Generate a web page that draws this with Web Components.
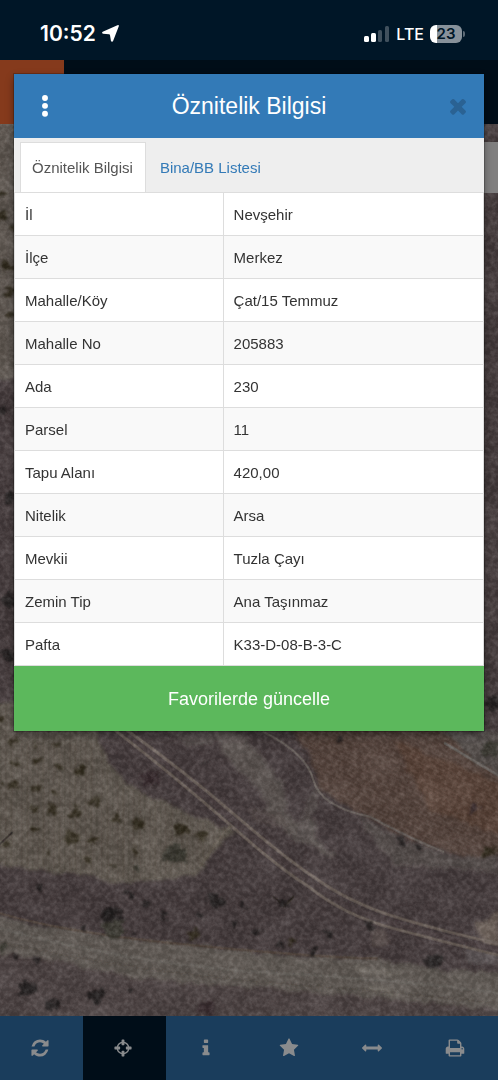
<!DOCTYPE html>
<html lang="tr">
<head>
<meta charset="utf-8">
<meta name="viewport" content="width=device-width, initial-scale=1">
<title>Öznitelik Bilgisi</title>
<style>
  html, body {
    margin: 0;
    min-height: 100%;
    background: #001627;
    font-family: "Liberation Sans", Arial, sans-serif;
  }
</style>
</head>
<body>
<parcel-app></parcel-app>

<script>
// 1792 x 1792 icon glyphs
const ICONS = {
  refresh: 'M1639 1056q0 5-1 7-64 268-268 434.500t-478 166.500q-146 0-282.500-55t-243.500-157l-129 129q-19 19-45 19t-45-19-19-45v-448q0-26 19-45t45-19h448q26 0 45 19t19 45-19 45l-137 137q71 66 161 102t187 36q134 0 250-65t186-179q11-17 53-117 8-23 30-23h192q13 0 22.500 9.500t9.500 22.500zm25-800v448q0 26-19 45t-45 19h-448q-26 0-45-19t-19-45 19-45l138-138q-148-137-349-137-134 0-250 65t-186 179q-11 17-53 117-8 23-30 23h-199q-13 0-22.500-9.500t-9.500-22.500v-7q65-268 270-434.500t480-166.500q146 0 284 55.500t245 156.500l130-129q19-19 45-19t45 19 19 45z',
  crosshairs: 'M1325 1024h-109q-26 0-45-19t-19-45v-128q0-26 19-45t45-19h109q-32-108-112.500-188.500t-188.500-112.500v109q0 26-19 45t-45 19h-128q-26 0-45-19t-19-45v-109q-108 32-188.500 112.500t-112.500 188.500h109q26 0 45 19t19 45v128q0 26-19 45t-45 19h-109q32 108 112.500 188.500t188.500 112.500v-109q0-26 19-45t45-19h128q26 0 45 19t19 45v109q108-32 188.500-112.500t112.500-188.500zm339-192v128q0 26-19 45t-45 19h-143q-37 161-154.500 278.500t-278.500 154.500v143q0 26-19 45t-45 19h-128q-26 0-45-19t-19-45v-143q-161-37-278.500-154.500t-154.500-278.500h-143q-26 0-45-19t-19-45v-128q0-26 19-45t45-19h143q37-161 154.500-278.500t278.500-154.500v-143q0-26 19-45t45-19h128q26 0 45 19t19 45v143q161 37 278.500 154.500t154.500 278.500h143q26 0 45 19t19 45z',
  info: 'M1216 1344v128q0 26-19 45t-45 19h-512q-26 0-45-19t-19-45v-128q0-26 19-45t45-19h64v-384h-64q-26 0-45-19t-19-45v-128q0-26 19-45t45-19h384q26 0 45 19t19 45v576h64q26 0 45 19t19 45zm-128-1152v192q0 26-19 45t-45 19h-256q-26 0-45-19t-19-45v-192q0-26 19-45t45-19h256q26 0 45 19t19 45z',
  star: 'M1728 647q0 22-26 48l-363 354 86 500q1 7 1 20 0 21-10.500 35.500t-30.500 14.500q-19 0-40-12l-449-236-449 236q-22 12-40 12-21 0-31.500-14.500t-10.500-35.500q0-6 2-20l86-500-364-354q-25-27-25-48 0-37 56-46l502-73 225-455q19-41 49-41t49 41l225 455 502 73q56 9 56 46z',
  measure: 'M1792 896q0 26-19 45l-256 256q-19 19-45 19t-45-19-19-45v-128h-1024v128q0 26-19 45t-45 19-45-19l-256-256q-19-19-19-45t19-45l256-256q19-19 45-19t45 19 19 45v128h1024v-128q0-26 19-45t45-19 45 19l256 256q19 19 19 45z',
  print: 'M448 1536h896v-256h-896v256zm0-640h896v-384h-160q-40 0-68-28t-28-68v-160h-640v640zm1152 64q0-26-19-45t-45-19-45 19-19 45 19 45 45 19 45-19 19-45zm128 0v416q0 13-9.500 22.500t-22.500 9.500h-224v160q0 40-28 68t-68 28h-960q-40 0-68-28t-28-68v-160h-224q-13 0-22.500-9.500t-9.500-22.500v-416q0-79 56.500-135.500t135.500-56.500h64v-544q0-40 28-68t68-28h672q40 0 88 20t76 48l152 152q28 28 48 76t20 88v256h64q79 0 135.500 56.500t56.500 135.500z',
  close: 'M1490 1322q0 40-28 68l-136 136q-28 28-68 28t-68-28l-294-294-294 294q-28 28-68 28t-68-28l-136-136q-28-28-28-68t28-68l294-294-294-294q-28-28-28-68t28-68l136-136q28-28 68-28t68 28l294 294 294-294q28-28 68-28t68 28l136 136q28 28 28 68t-28 68l-294 294 294 294q28 28 28 68z',
  menu: 'M896 76a220 220 0 1 1 0 440a220 220 0 1 1 0-440zM896 666a220 220 0 1 1 0 440a220 220 0 1 1 0-440zM896 1256a220 220 0 1 1 0 440a220 220 0 1 1 0-440z'
};

// Attribute rows of the selected parcel
const PARCEL = [
  ['İl', 'Nevşehir'],
  ['İlçe', 'Merkez'],
  ['Mahalle/Köy', 'Çat/15 Temmuz'],
  ['Mahalle No', '205883'],
  ['Ada', '230'],
  ['Parsel', '11'],
  ['Tapu Alanı', '420,00'],
  ['Nitelik', 'Arsa'],
  ['Mevkii', 'Tuzla Çayı'],
  ['Zemin Tip', 'Ana Taşınmaz'],
  ['Pafta', 'K33-D-08-B-3-C']
];

/**
 * Attach an open shadow root and fill it from a template
 * @param {HTMLElement} host - The element that gets the root
 * @param {string} html - Styles and markup
 */
function render(host, html) {
  const template = document.createElement('template');
  template.innerHTML = html;
  const root = host.attachShadow({ mode: 'open' });
  root.appendChild(template.content.cloneNode(true));
  return root;
}

class FaIcon extends HTMLElement {
  constructor() {
    super();
    this.root = render(this, `
      <style>
        :host { display: block; width: 20px; height: 20px; }
        svg { display: block; width: 100%; height: 100%; fill: currentColor; }
      </style>
      <svg viewBox="0 0 1792 1792" aria-hidden="true"><path/></svg>
    `);
  }
  connectedCallback() {
    this.root.querySelector('path').setAttribute('d', ICONS[this.getAttribute('name')]);
  }
}

class StatusBar extends HTMLElement {
  constructor() {
    super();
    render(this, `
      <style>
        :host {
          display: flex;
          align-items: center;
          justify-content: space-between;
          box-sizing: border-box;
          height: 60px;
          padding: 7px 33px 0 40px;
          background: #001627;
          color: #fff;
          font-family: Inter, sans-serif;
          font-weight: 600;
        }
        .side { display: flex; align-items: center; gap: 6px; }
        .time { font-size: 21px; line-height: 24px; }
        .net { font-size: 16px; line-height: 24px; font-weight: 500; }
        svg { display: block; }
        .battery { display: flex; align-items: center; gap: 1px; }
        .level {
          width: 32px;
          border-radius: 6px;
          background: linear-gradient(90deg, #fff 23%, #87919a 23%);
          color: #001627;
          font-size: 15px;
          line-height: 18px;
          text-align: center;
        }
        .cap { width: 2px; height: 6px; border-radius: 0 2px 2px 0; background: #5d6a75; }
      </style>
      <div class="side">
        <span class="time">10:52</span>
        <svg width="17" height="17" viewBox="0 0 17 17" fill="#fff" aria-hidden="true">
          <path d="M16.800 1.200 11.200 15.700Q10.400 17.400 9 16.200L8 10.200Q7.900 9.300 7 9.300L1 8.800Q-.700 8 .700 6.800L15.400.200Q17.200-.400 16.800 1.200z"/>
        </svg>
      </div>
      <div class="side">
        <svg width="26" height="16" viewBox="0 0 26 16" fill="#fff" aria-hidden="true">
          <rect x="0" y="10" width="5" height="6" rx="1.500"/>
          <rect x="7" y="7" width="5" height="9" rx="1.500"/>
          <rect x="14" y="4" width="4" height="12" rx="1.500" opacity=".25"/>
          <rect x="21" y="0" width="4" height="16" rx="1.500" opacity=".25"/>
        </svg>
        <span class="net">LTE</span>
        <div class="battery"><div class="level">23</div><div class="cap"></div></div>
      </div>
    `);
  }
}

class AppHeader extends HTMLElement {
  constructor() {
    super();
    render(this, `
      <style>
        :host { display: flex; height: 64px; background: #000d18; }
        .logo { width: 64px; background: #853a1c; }
      </style>
      <div class="logo"></div>
    `);
  }
}

// Bushes and trees: x, y, radius, tone
const BUSHES = [
  [42, 305, 14, 0], [108, 316, 8, 0], [171, 313, 9, 0], [45, 370, 11, 0], [113, 360, 14, 0],
  [175, 380, 12, 0], [238, 394, 20, 0], [42, 436, 15, 0], [108, 442, 16, 0], [165, 457, 9, 0],
  [283, 482, 18, 0], [160, 508, 19, 0], [103, 508, 12, 0], [227, 517, 17, 0], [346, 541, 15, 0],
  [412, 550, 17, 0], [545, 567, 20, 0], [606, 586, 20, 0], [105, 567, 9, 0], [213, 592, 24, 0],
  [280, 600, 14, 0], [407, 630, 11, 0], [525, 645, 34, 2], [262, 659, 10, 0], [22, 612, 12, 0],
  [333, 679, 6, 0], [407, 690, 9, 2], [146, 643, 5, 0], [3, 432, 8, 0], [4, 236, 10, 0],
  [118, 742, 13, 1], [386, 762, 11, 1], [434, 793, 13, 1], [495, 828, 14, 1], [645, 782, 26, 1],
  [334, 832, 34, 1], [340, 868, 34, 2], [400, 883, 7, 1], [580, 887, 20, 0], [253, 868, 9, 1],
  [728, 793, 9, 1], [706, 858, 8, 1], [770, 877, 11, 1], [880, 905, 10, 0], [985, 880, 12, 1],
  [600, 826, 8, 1], [850, 788, 14, 1], [840, 912, 9, 1], [945, 935, 13, 1], [1108, 857, 11, 1],
  [1300, 965, 24, 1], [1425, 505, 13, 3], [1018, 300, 8, 1], [620, 372, 8, 1], [1468, 637, 18, 0],
  [1205, 600, 12, 1], [1258, 625, 13, 1], [80, 1045, 28, 1], [155, 1095, 24, 1], [290, 1065, 24, 1],
  [390, 1048, 9, 1], [110, 958, 12, 1], [40, 947, 9, 1], [8, 925, 14, 2], [620, 1105, 28, 3],
  [450, 415, 28, 3], [1472, 330, 26, 2], [1480, 190, 24, 1],
  [8, -1340, 14, 0], [2, -1275, 22, 0], [38, -1240, 10, 0], [22, -1120, 20, 0], [30, -1045, 17, 0],
  [35, -980, 12, 0], [8, -690, 12, 1], [30, -430, 18, 1], [28, -120, 24, 1], [22, 45, 24, 1]
];
const TONES = ['#2e2819', '#1f1c1c', '#37372e', '#382b2e'];

class SatelliteMap extends HTMLElement {
  constructor() {
    super();
    const bushes = BUSHES.map(([x, y, r, tone]) =>
      `<ellipse cx="${x}" cy="${y}" rx="${r}" ry="${r * 0.85}" fill="${TONES[tone]}"/>`).join('');
    render(this, `
      <style>
        :host { display: block; position: relative; overflow: hidden; background: #493f40; }
        .ground { position: absolute; inset: 0; width: 100%; height: 100%; }
        ::slotted(*) { position: absolute; top: 18px; right: 0; }
      </style>
      <svg class="ground" viewBox="0 -1548 1494 2676" preserveAspectRatio="xMidYMax slice" aria-hidden="true">
        <defs>
          <filter id="rough" x="-5%" y="-5%" width="110%" height="110%" color-interpolation-filters="sRGB">
            <feTurbulence type="fractalNoise" baseFrequency=".05" numOctaves="2" seed="4"/>
            <feDisplacementMap in="SourceGraphic" scale="40" xChannelSelector="R" yChannelSelector="G"/>
            <feGaussianBlur stdDeviation="3"/>
          </filter>
          <filter id="edge" x="-5%" y="-5%" width="110%" height="110%" color-interpolation-filters="sRGB">
            <feTurbulence type="fractalNoise" baseFrequency=".025" numOctaves="3" seed="9"/>
            <feDisplacementMap in="SourceGraphic" scale="30" xChannelSelector="R" yChannelSelector="G"/>
            <feGaussianBlur stdDeviation="4"/>
          </filter>
          <filter id="soft"><feGaussianBlur stdDeviation="2"/></filter>
          <filter id="grain" x="0" y="0" width="100%" height="100%" color-interpolation-filters="sRGB">
            <feTurbulence type="fractalNoise" baseFrequency=".07" numOctaves="3" seed="21"/>
            <feColorMatrix values="1.600 0 0 0 -.520  1.600 0 0 0 -.540  1.600 0 0 0 -.540  0 0 0 0 1"/>
          </filter>
          <filter id="patches" x="0" y="0" width="100%" height="100%" color-interpolation-filters="sRGB">
            <feTurbulence type="fractalNoise" baseFrequency=".012" numOctaves="4" seed="7"/>
            <feColorMatrix values="2 0 0 0 -.720  2 0 0 0 -.740  2 0 0 0 -.740  0 0 0 0 1"/>
          </filter>
          <pattern id="furrow" width="11" height="11" patternUnits="userSpaceOnUse" patternTransform="rotate(28)">
            <rect width="11" height="4" fill="#2c1c18" opacity=".180"/>
          </pattern>
          <pattern id="rows" width="16" height="16" patternUnits="userSpaceOnUse">
            <rect width="5" height="16" fill="#3d372e" opacity=".140"/>
          </pattern>
        </defs>
        <rect y="-1548" width="1494" height="2676" fill="#483e3f"/>
        <g filter="url(#edge)">
          <path d="M-40-1600H90V-900L50-780H-40z" fill="#625b54"/>
          <path d="M-40 190H60L290 265 310 330Q335 410 440 460L560 520 700 570Q650 620 610 680 575 720 410 728 330 735 270 710L-40 672z" fill="#645d54"/>
          <path d="M860 250H1320L1540 420V650L1380 648 1210 595 960 450 925 335z" fill="#5c4a42"/>
          <path d="M1180 300 1540 440V600L1290 510z" fill="#624a3e"/>
          <path d="M1320 270H1540V425L1440 375z" fill="#57514e"/>
          <path d="M630 250 720 280 790 350 850 430 860 520 900 550 945 540 950 600 1010 640 1000 655 930 620 880 600 800 520 790 460 720 400 670 340z" fill="#665f5b" opacity=".750"/>
          <path d="M480 250H630L640 310 560 320z" fill="#5f5855" opacity=".600"/>
          <path d="M940 430 960 440 925 610 880 600z" fill="#635b58" opacity=".600"/>
          <path d="M740 515H840L865 550 820 565z" fill="#625955" opacity=".600"/>
          <path d="M1060 520 1210 600 1370 650 1500 640V700L1350 685 1180 680 1130 610z" fill="#5c5553" opacity=".800"/>
          <path d="M1430 850 1500 815V940L1440 910z" fill="#6c6058"/>
          <path d="M1110 865 1150 870 1165 910 1110 920z" fill="#625753" opacity=".700"/>
          <path d="M-40 880 1540 1120V1180H-40z" fill="#554b49" opacity=".600"/>
          <path d="M-40 820 90 850 280 880 600 915 840 945 1130 955 1300 985 1540 1000V1110L1200 1080 850 1045 560 1030 360 1005 200 965-40 935z" fill="#645e58"/>
          <path d="M1100 1035 1170 1040 1190 1065 1120 1055zM1060 985 1200 990 1210 1005 1080 1000z" fill="#7b746d" opacity=".800"/>
          <path d="M800 1000 850 1030 930 1035 840 1040z" fill="#706964"/>
          <path d="M1400 900 1500 930V970H1400z" fill="#625b5c"/>
        </g>
        <path d="M0 190H270L330 410 700 570 610 680 410 728 0 672z" fill="url(#rows)"/>
        <path d="M860 250H1320L1494 420V650L1380 648 1210 595 960 450z" fill="url(#furrow)"/>
        <g fill="none" filter="url(#soft)" stroke-linecap="round">
          <path d="M365 265Q540 400 690 530T930 730Q1040 810 1190 855T1494 930" stroke="#4b4142" stroke-width="22"/>
          <path d="M345 270Q520 405 685 550T920 735Q1030 825 1180 865T1494 945" stroke="#71665f" stroke-width="9"/>
          <path d="M380 270Q560 400 705 525T940 710Q1050 790 1200 835T1494 910" stroke="#71665f" stroke-width="9"/>
          <path d="M690 560Q650 600 600 680" stroke="#6b6258" stroke-width="8"/>
          <path d="M790 275Q920 340 940 420T1110 530Q1240 600 1330 635" stroke="#6e6661" stroke-width="6"/>
          <path d="M1335 310 1494 405" stroke="#706b66" stroke-width="8"/>
          <path d="M0 865Q400 975 840 1000T1494 1060" stroke="#747069" stroke-width="9" opacity=".500"/>
          <path d="M0 905Q400 995 840 1030T1494 1090" stroke="#524a46" stroke-width="8" opacity=".400"/>
          <path d="M0 820Q200 880 600 918T1130 955" stroke="#574a41" stroke-width="7"/>
          <path d="M0 612 36 578M820 770 856 800M880 770 850 800" stroke="#2c2622" stroke-width="5"/>
        </g>
        <g filter="url(#rough)" opacity=".9">${bushes}</g>
        <rect y="-1548" width="1494" height="2676" filter="url(#patches)" opacity=".070"/>
        <rect y="-1548" width="1494" height="2676" filter="url(#grain)" opacity=".120"/>
      </svg>
      <slot></slot>
    `);
  }
}

class ToolBar extends HTMLElement {
  constructor() {
    super();
    render(this, `
      <style>
        :host { display: block; background: #1a3d5c; }
        nav { display: grid; grid-template-columns: repeat(6, 1fr); }
        button {
          display: flex;
          align-items: center;
          justify-content: center;
          height: 64px;
          padding: 0 3px 0 0;
          border: 0;
          background: none;
          color: #898b8d;
        }
        button[aria-pressed="true"] { background: #000d18; }
      </style>
      <nav>
        <button type="button" aria-label="Yenile"><fa-icon name="refresh"></fa-icon></button>
        <button type="button" aria-label="Konum" aria-pressed="true"><fa-icon name="crosshairs"></fa-icon></button>
        <button type="button" aria-label="Bilgi"><fa-icon name="info"></fa-icon></button>
        <button type="button" aria-label="Favoriler"><fa-icon name="star"></fa-icon></button>
        <button type="button" aria-label="Ölçüm"><fa-icon name="measure"></fa-icon></button>
        <button type="button" aria-label="Yazdır"><fa-icon name="print"></fa-icon></button>
      </nav>
    `);
  }
}

class InfoDialog extends HTMLElement {
  constructor() {
    super();
    render(this, `
      <style>
        :host {
          display: block;
          background: #fff;
          box-shadow: 0 0 0 1px rgba(0, 0, 0, .2), 0 4px 8px rgba(0, 0, 0, .4);
        }
        header {
          display: grid;
          grid-template-columns: 62px 1fr 52px;
          align-items: center;
          height: 64px;
          background: #337ab7;
          color: #fff;
        }
        h1 {
          margin: 0;
          padding-right: 10px;
          font-size: 23px;
          line-height: 32px;
          font-weight: 400;
          text-align: center;
        }
        header button {
          display: flex;
          align-items: center;
          justify-content: center;
          height: 64px;
          padding: 0;
          border: 0;
          background: none;
          color: inherit;
        }
        header fa-icon { width: 24px; height: 24px; }
        .close { color: #2a6293; }
      </style>
      <header>
        <button type="button" aria-label="Menü"><fa-icon name="menu"></fa-icon></button>
        <h1><slot name="title"></slot></h1>
        <button class="close" type="button" aria-label="Kapat"><fa-icon name="close"></fa-icon></button>
      </header>
      <slot></slot>
    `);
  }
}

class TabStrip extends HTMLElement {
  constructor() {
    super();
    render(this, `
      <style>
        :host { display: block; background: #eee; }
        nav {
          display: flex;
          align-items: flex-end;
          gap: 2px;
          height: 54px;
          padding-left: 6px;
        }
        a {
          box-sizing: border-box;
          height: 50px;
          padding: 0 12px 0 11px;
          border: 1px solid transparent;
          border-bottom: 0;
          color: #337ab7;
          font-size: 15px;
          line-height: 50px;
          text-decoration: none;
        }
        a[aria-current] { border-color: #ddd; background: #fff; color: #555; }
      </style>
      <nav>
        <a href="#bilgi" aria-current="true">Öznitelik Bilgisi</a>
        <a href="#bina">Bina/BB Listesi</a>
      </nav>
    `);
  }
}

class AttributeTable extends HTMLElement {
  constructor() {
    super();
    const root = render(this, `
      <style>
        :host { display: block; }
        table {
          width: 100%;
          border-collapse: collapse;
          table-layout: fixed;
          color: #333;
          font-size: 15px;
          line-height: 22px;
        }
        th, td {
          padding: 11px 10px 9px;
          border: 1px solid #ddd;
          font-weight: 400;
          text-align: left;
        }
        th { width: 40%; }
        tr:nth-child(even) { background: #f9f9f9; }
      </style>
      <table><tbody></tbody></table>
    `);
    const body = root.querySelector('tbody');
    PARCEL.forEach(([name, value]) => {
      const row = body.insertRow();
      const head = document.createElement('th');
      head.scope = 'row';
      head.textContent = name;
      row.appendChild(head);
      row.insertCell().textContent = value;
    });
  }
}

class ActionButton extends HTMLElement {
  constructor() {
    super();
    render(this, `
      <style>
        :host { display: block; }
        button {
          display: block;
          width: 100%;
          height: 65px;
          padding: 0;
          border: 0;
          background: #5cb85c;
          color: #fff;
          font-family: inherit;
          font-size: 18px;
          line-height: 24px;
        }
      </style>
      <button type="button"><slot></slot></button>
    `);
  }
}

class ParcelApp extends HTMLElement {
  constructor() {
    super();
    render(this, `
      <style>
        :host {
          display: grid;
          grid-template-rows: auto auto 1fr auto;
          position: relative;
          min-height: 100vh;
        }
        .control { width: 48px; height: 51px; background: #807f7f; }
        .overlay { position: absolute; top: 0; left: 0; right: 0; padding: 74px 14px; }
      </style>
      <status-bar></status-bar>
      <app-header></app-header>
      <satellite-map><div class="control"></div></satellite-map>
      <tool-bar></tool-bar>
      <div class="overlay">
        <info-dialog role="dialog" aria-label="Öznitelik Bilgisi">
          <span slot="title">Öznitelik Bilgisi</span>
          <tab-strip></tab-strip>
          <attribute-table></attribute-table>
          <action-button>Favorilerde güncelle</action-button>
        </info-dialog>
      </div>
    `);
  }
}

customElements.define('fa-icon', FaIcon);
customElements.define('status-bar', StatusBar);
customElements.define('app-header', AppHeader);
customElements.define('satellite-map', SatelliteMap);
customElements.define('tool-bar', ToolBar);
customElements.define('tab-strip', TabStrip);
customElements.define('attribute-table', AttributeTable);
customElements.define('action-button', ActionButton);
customElements.define('info-dialog', InfoDialog);
customElements.define('parcel-app', ParcelApp);
</script>
</body>
</html>
